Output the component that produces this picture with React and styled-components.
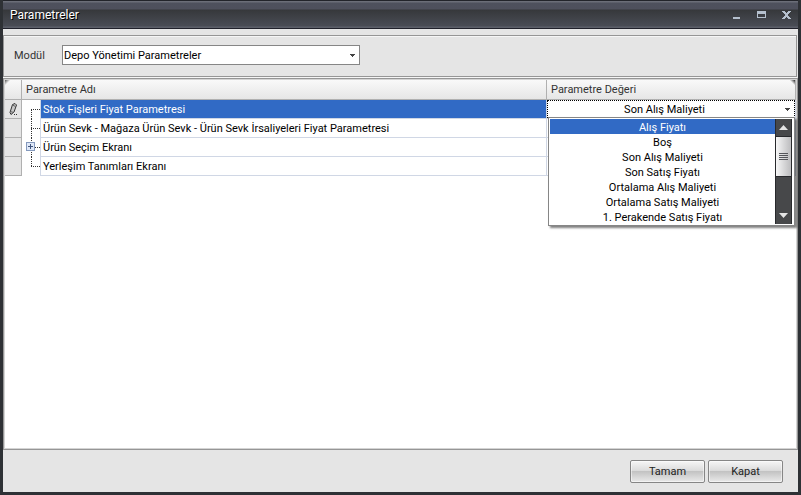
import styled, { createGlobalStyle } from "styled-components";

const GlobalStyle = createGlobalStyle`
  * {
    box-sizing: border-box;
  }
  body {
    margin: 0;
    background: #e5e5e5;
  }
  body, button, select {
    font-family: Roboto, "Noto Sans", sans-serif;
    font-size: 11px;
    color: #000;
  }
`;

const Window = styled.div`
  display: flex;
  flex-direction: column;
  min-height: 100vh;
  background: #e5e5e5;
  border: solid #2e3135;
  border-width: 0 3px 3px;
`;

const TitleBar = styled.header`
  display: flex;
  align-items: center;
  justify-content: space-between;
  height: 29px;
  padding: 0 0 0 7px;
  border-top: 1px solid #22242a;
  border-bottom: 1px solid #20212b;
  background: linear-gradient(#6b6e78 0 1px, #4e515d 2px, #4e505c 8px, #36383b 9px, #494c55 25px, #5c5f69 26px);
`;

const Title = styled.h1`
  margin: 0;
  font-size: 12px;
  font-weight: normal;
  color: #fff;
  text-shadow: 1px 1px #000;
`;

const WindowButtons = styled.div`
  display: flex;
  gap: 1px;
`;

const WindowButton = styled.button`
  display: flex;
  align-items: center;
  justify-content: center;
  width: 24px;
  height: 16px;
  padding: 0;
  border: 0;
  background: none;
`;

const FilterPanel = styled.section`
  display: flex;
  align-items: center;
  height: 42px;
  margin: 6px 1px 1px 0;
  padding: 0 10px 2px;
  border: 1px solid #969696;
  box-shadow: inset 0 1px #f6f6f6, 0 1px #f6f6f6;
`;

const Label = styled.label`
  width: 48px;
  color: #333;
`;

const SelectBox = styled.div`
  display: flex;
  align-items: center;
  position: relative;
  width: ${(p) => p.$width};
  height: ${(p) => p.$height};
  background: #fff;
  border: ${(p) => p.$border};
`;

const Select = styled.select`
  appearance: none;
  width: 100%;
  height: 100%;
  padding: 0 14px 0 1px;
  border: 0;
  outline: 0;
  background: none;
  text-align-last: ${(p) => p.$align || "left"};
`;

const SelectArrow = styled.svg`
  position: absolute;
  right: 4px;
  pointer-events: none;
`;

const Grid = styled.main`
  flex: 1;
  background: #fff;
  border: 1px solid #969696;
  box-shadow: inset 0 0 0 1px #d4d4d4;
  padding: 1px;
`;

const Table = styled.table`
  width: 100%;
  table-layout: fixed;
  border-collapse: separate;
  border-spacing: 0;
`;

const Column = styled.col`
  width: ${(p) => p.$width};
`;

const HeadCell = styled.th`
  height: 20px;
  padding: 0 4px;
  border: solid #b0b0b0;
  border-width: 0 1px 1px 0;
  background:
    linear-gradient(${(p) => p.$corner || "0deg, transparent"}, transparent 4px),
    linear-gradient(#f9f9f9, #e6e6e6);
  color: #333;
  font-weight: normal;
  text-align: left;
`;

const MarkCell = styled.td`
  height: 19px;
  padding: 0;
  border: solid #b0b0b0;
  border-width: 0 1px 1px 0;
  background: #e5e5e5;
`;

const TreeCell = styled.td`
  height: 19px;
  padding: 0;
`;

const NameCell = styled.td`
  height: 19px;
  padding: 0 2px;
  border: solid #d0d7e5;
  border-width: 0 1px 1px;
  white-space: nowrap;
  overflow: hidden;
  background: ${(p) => (p.$selected ? "#316ac5" : "#fff")};
  background-clip: padding-box;
  color: ${(p) => (p.$selected ? "#fff" : "#000")};
`;

const ValueCell = styled.td`
  position: relative;
  height: 19px;
  padding: 0;
  border: solid #d0d7e5;
  border-width: 0 1px 1px 0;
`;

const Block = styled.svg`
  display: block;
`;

const Popup = styled.div`
  position: absolute;
  z-index: 1;
  top: 17px;
  left: 1px;
  right: 0;
  display: flex;
  padding: 1px;
  border: 1px solid #868686;
  background: #fff;
  box-shadow: 2px 2px 2px rgba(0, 0, 0, 0.5);
`;

const Options = styled.ul`
  flex: 1;
  margin: 0;
  padding: 0;
  list-style: none;
`;

const Option = styled.li`
  height: 15px;
  line-height: 17px;
  text-align: center;
  background: ${(p) => (p.$active ? "#316ac5" : "none")};
  color: ${(p) => (p.$active ? "#fff" : "#000")};
`;

const ScrollBar = styled.div`
  display: flex;
  flex-direction: column;
  width: 17px;
  margin-right: 1px;
  border: solid #28292c;
  border-width: 0 1px;
  background: #47484a;
`;

const ScrollButton = styled.button`
  display: flex;
  align-items: center;
  justify-content: center;
  height: 17px;
  padding: 0;
  border: 0;
  background: #47484a;
`;

const ScrollThumb = styled.div`
  display: flex;
  align-items: center;
  justify-content: center;
  height: 41px;
  margin-bottom: auto;
  border: solid #28292c;
  border-width: 1px 0;
  background: linear-gradient(90deg, #f7f7f7, #d9d9da 50%, #bcbcbe);
`;

const Footer = styled.footer`
  display: flex;
  justify-content: flex-end;
  gap: 3px;
  padding: 10px 15px 9px;
`;

const Button = styled.button`
  width: 75px;
  height: 23px;
  padding: 0;
  border: 1px solid #868686;
  border-radius: 2px;
  background: linear-gradient(#f6f6f6, #dcdcdc 45%, #c3c3c3 50%, #e9e9e9);
  box-shadow: inset 0 0 0 1px rgba(255, 255, 255, 0.5);
  color: #222;
`;

const modules = ["Depo Yönetimi Parametreler"];

const rows = [
  { name: "Stok Fişleri Fiyat Parametresi", selected: true },
  { name: "Ürün Sevk - Mağaza Ürün Sevk - Ürün Sevk İrsaliyeleri Fiyat Parametresi" },
  { name: "Ürün Seçim Ekranı", expandable: true },
  { name: "Yerleşim Tanımları Ekranı" },
];

const prices = [
  "Alış Fiyatı",
  "Boş",
  "Son Alış Maliyeti",
  "Son Satış Fiyatı",
  "Ortalama Alış Maliyeti",
  "Ortalama Satış Maliyeti",
  "1. Perakende Satış Fiyatı",
];

const DownArrow = () => (
  <SelectArrow width="5" height="3" shapeRendering="crispEdges">
    <path d="M0 0h5v1h-1v1h-1v1h-1v-1h-1v-1h-1z" fill="#444" />
  </SelectArrow>
);

const Pencil = () => (
  <Block width="16" height="18" fill="none" stroke="#333">
    <path d="M7.500 4.500L10 3.500L11.500 5L9 12L6 14.500L5 12.500z" fill="#c8c8c8" />
    <path d="M7.500 5L10.500 6.500M5.500 11.500L8.500 12.500" stroke="#666" />
    <path d="M9 14.500h1M11 14.500h1" />
  </Block>
);

// dotted branch lines, the last row stops at its own branch
const TreeLines = ({ first, last, expandable }) => (
  <Block width="18" height="19" shapeRendering="crispEdges">
    <g stroke="#333" strokeDasharray="1 1">
      <path d={`M9.5 ${first ? 10 : 0}V${last ? 10 : 19}`} />
      <path d="M9 9.500H18" />
    </g>
    {expandable && (
      <g>
        <rect x="4.500" y="4.500" width="8" height="8" rx="1" fill="#dfe8f8" stroke="#8499bd" />
        <path d="M6 8.500h5M8.500 6v5" stroke="#41557c" />
      </g>
    )}
  </Block>
);

const App = () => {
  return (
    <>
      <GlobalStyle />
      <Window>
        <TitleBar>
          <Title>Parametreler</Title>
          <WindowButtons>
            <WindowButton aria-label="Simge durumuna küçült">
              <svg width="9" height="9" shapeRendering="crispEdges">
                <path d="M1 7h7v2h-7z" fill="#b5c0ce" />
              </svg>
            </WindowButton>
            <WindowButton aria-label="Ekranı kapla">
              <svg width="9" height="8" shapeRendering="crispEdges">
                <path d="M0 0h9v7H0zM1 3v3h7V3z" fill="#b5c0ce" fillRule="evenodd" />
              </svg>
            </WindowButton>
            <WindowButton aria-label="Pencereyi kapat">
              <svg width="9" height="8" shapeRendering="crispEdges">
                <path
                  d="M0 0h3v1h1v1h1v-1h1v-1h3v1h-1v1h-1v1h-1v2h1v1h1v1h1v1h-3v-1h-1v-1h-1v1h-1v1h-3v-1h1v-1h1v-1h1v-2h-1v-1h-1v-1h-1z"
                  fill="#b5c0ce"
                />
              </svg>
            </WindowButton>
          </WindowButtons>
        </TitleBar>

        <FilterPanel>
          <Label htmlFor="module">Modül</Label>
          <SelectBox $width="298px" $height="20px" $border="1px solid #868686">
            <Select id="module">
              {modules.map((m) => (
                <option key={m}>{m}</option>
              ))}
            </Select>
            <DownArrow />
          </SelectBox>
        </FilterPanel>

        <Grid>
          <Table>
            <colgroup>
              <Column $width="17px" />
              <Column $width="18px" />
              <Column $width="auto" />
              <Column $width="249px" />
            </colgroup>
            <thead>
              <tr>
                <HeadCell $corner="135deg, #555" />
                <HeadCell colSpan={2}>Parametre Adı</HeadCell>
                <HeadCell $corner="225deg, #222">Parametre Değeri</HeadCell>
              </tr>
            </thead>
            <tbody>
              {rows.map((row, i) => (
                <tr key={row.name}>
                  <MarkCell>{row.selected && <Pencil />}</MarkCell>
                  <TreeCell>
                    <TreeLines
                      first={i === 0}
                      last={i === rows.length - 1}
                      expandable={row.expandable}
                    />
                  </TreeCell>
                  <NameCell $selected={row.selected}>{row.name}</NameCell>
                  <ValueCell>
                    {row.selected && (
                      <>
                        <SelectBox $width="100%" $height="18px" $border="1px dotted #000">
                          <Select
                            $align="center"
                            aria-label={row.name}
                            defaultValue="Son Alış Maliyeti"
                          >
                            {prices.map((p) => (
                              <option key={p}>{p}</option>
                            ))}
                          </Select>
                          <DownArrow />
                        </SelectBox>
                        <Popup>
                          <Options role="listbox" aria-label={row.name}>
                            {prices.map((p, n) => (
                              <Option
                                key={p}
                                role="option"
                                aria-selected={n === 0}
                                $active={n === 0}
                              >
                                {p}
                              </Option>
                            ))}
                          </Options>
                          <ScrollBar>
                            <ScrollButton aria-label="Yukarı">
                              <svg width="9" height="5">
                                <path d="M4.500 0L9 5H0z" fill="#e5e5e5" />
                              </svg>
                            </ScrollButton>
                            <ScrollThumb>
                              <svg width="9" height="8" shapeRendering="crispEdges">
                                <path d="M0 .5h9M0 2.500h9M0 4.500h9M0 6.500h9" stroke="#55565a" />
                              </svg>
                            </ScrollThumb>
                            <ScrollButton aria-label="Aşağı">
                              <svg width="9" height="5">
                                <path d="M0 0H9L4.500 5z" fill="#e5e5e5" />
                              </svg>
                            </ScrollButton>
                          </ScrollBar>
                        </Popup>
                      </>
                    )}
                  </ValueCell>
                </tr>
              ))}
            </tbody>
          </Table>
        </Grid>

        <Footer>
          <Button>Tamam</Button>
          <Button>Kapat</Button>
        </Footer>
      </Window>
    </>
  );
};

export default App;
